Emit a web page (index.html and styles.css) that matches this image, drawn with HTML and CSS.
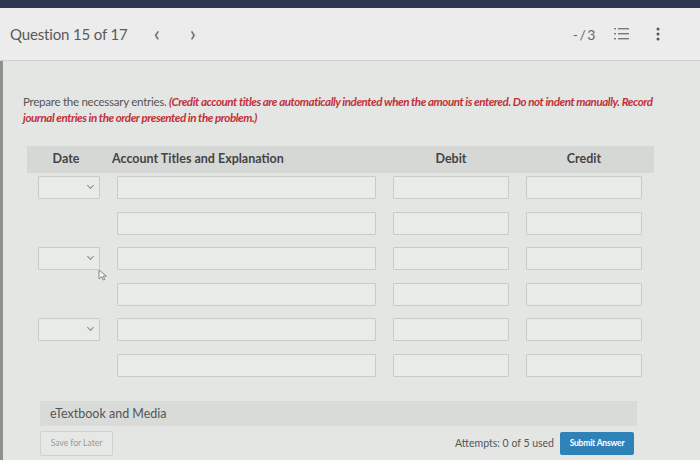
FILE: index.html
```html
<!DOCTYPE html>
<html>
<head>
<meta charset="utf-8">
<link rel="stylesheet" href="styles.css">
</head>
<body>
<div class="topstrip"></div>
<header class="qhead">
  <div class="qleft">
    <span class="qtitle">Question 15 of 17</span>
    <span class="nav">&lsaquo;</span>
    <span class="nav nav2">&rsaquo;</span>
  </div>
  <div class="qright">
    <span class="score">-/3</span>
    <svg class="listicon" width="16" height="14" viewBox="0 0 16 14">
      <g fill="#7a7a7a">
        <rect x="0" y="1" width="2" height="1.4"/>
        <rect x="0" y="6" width="2" height="1.4"/>
        <rect x="0" y="11" width="2" height="1.4"/>
        <rect x="4" y="1" width="11" height="1.4"/>
        <rect x="4" y="6" width="11" height="1.4"/>
        <rect x="4" y="11" width="11" height="1.4"/>
      </g>
    </svg>
    <svg class="kebab" width="4" height="14" viewBox="0 0 4 14">
      <g fill="#555">
        <circle cx="2" cy="2" r="1.5"/>
        <circle cx="2" cy="7" r="1.5"/>
        <circle cx="2" cy="12" r="1.5"/>
      </g>
    </svg>
  </div>
</header>
<main class="main">
  <p class="instr">Prepare the necessary entries. <em class="red">(Credit account titles are automatically indented when the amount is entered. Do not indent manually. Record</em><br><em class="red">journal entries in the order presented in the problem.)</em></p>

  <div class="table">
    <div class="thead">
      <span class="th th-date">Date</span>
      <span class="th th-acct">Account Titles and Explanation</span>
      <span class="th th-num">Debit</span>
      <span class="th th-num">Credit</span>
    </div>
    <div class="rows">
      <div class="row">
        <div class="sel"><span class="chev"></span></div>
        <div class="inp"></div><div class="inp"></div><div class="inp"></div>
      </div>
      <div class="row">
        <div class="nosel"></div>
        <div class="inp"></div><div class="inp"></div><div class="inp"></div>
      </div>
      <div class="row">
        <div class="sel"><span class="chev"></span></div>
        <div class="inp"></div><div class="inp"></div><div class="inp"></div>
      </div>
      <div class="row">
        <div class="nosel"></div>
        <div class="inp"></div><div class="inp"></div><div class="inp"></div>
      </div>
      <div class="row">
        <div class="sel"><span class="chev"></span></div>
        <div class="inp"></div><div class="inp"></div><div class="inp"></div>
      </div>
      <div class="row">
        <div class="nosel"></div>
        <div class="inp"></div><div class="inp"></div><div class="inp"></div>
      </div>
    </div>
    <svg class="cursor" width="10" height="12" viewBox="0 0 10 12">
      <path d="M1 1 L1 10 L3.5 7.8 L5.3 11 L6.8 10.3 L5 7.2 L8.5 7.2 Z" fill="#f4f4f4" stroke="#777" stroke-width="0.9"/>
    </svg>
  </div>

  <div class="etext">eTextbook and Media</div>

  <div class="footer">
    <button class="save">Save for Later</button>
    <div class="fright">
      <span class="attempts">Attempts: 0 of 5 used</span>
      <button class="submit">Submit Answer</button>
    </div>
  </div>
</main>
</body>
</html>
```

FILE: styles.css
```css
* { box-sizing: border-box; }
html, body { margin: 0; padding: 0; }
body {
  width: 700px;
  height: 460px;
  overflow: hidden;
  background: #e4e6e4;
  font-family: Lato, "Open Sans", sans-serif;
  color: #444;
}
.topstrip {
  height: 8px;
  background: #2d3752;
}
.qhead {
  height: 53px;
  background: #ececec;
  border-bottom: 1px solid #cfcfcf;
  display: flex;
  align-items: center;
  justify-content: space-between;
  padding: 0 40px 0 10px;
}
.qleft { display: flex; align-items: center; }
.qtitle {
  font-size: 15px;
  color: #5a5a5a;
  letter-spacing: -0.15px;
}
.nav {
  font-size: 22px;
  color: #666;
  margin-left: 26px;
  line-height: 1;
  position: relative;
  top: -1px;
}
.nav2 { margin-left: 30px; }
.qright { display: flex; align-items: center; }
.score {
  font-size: 14px;
  color: #666;
  letter-spacing: 1.5px;
  margin-right: 17px;
}
.listicon { margin-right: 26px; }
.main {
  height: 399px;
  border-left: 3px solid #8e908e;
  padding: 0 0 0 20px;
}
.instr {
  margin: 0;
  padding-top: 33px;
  width: 660px;
  font-size: 11.6px;
  line-height: 16px;
  color: #555;
  letter-spacing: -0.3px;
  white-space: nowrap;
}
.red {
  color: #c2303a;
  font-weight: bold;
  font-style: italic;
  letter-spacing: -0.45px;
}
.table {
  margin-top: 20px;
  margin-left: 4px;
  width: 627px;
  position: relative;
}
.thead {
  height: 27px;
  background: #d6d8d6;
  display: grid;
  grid-template-columns: 62px 259px 116px 116px;
  column-gap: 17px;
  padding-left: 11px;
  padding-bottom: 3px;
  align-items: center;
  font-size: 12.5px;
  font-weight: bold;
  color: #444;
}
.th-date { text-align: center; padding-right: 6px; }
.th-acct { margin-left: -5px; }
.th-num { text-align: center; }
.rows {
  padding-top: 3px;
  display: flex;
  flex-direction: column;
  gap: 12.5px;
}
.row {
  display: grid;
  grid-template-columns: 62px 259px 116px 116px;
  column-gap: 17px;
  padding-left: 11px;
  height: 23px;
}
.inp, .sel {
  border: 1px solid #c9cbc9;
  background: #e9ebe9;
  border-radius: 1px;
}
.sel { position: relative; }
.chev {
  position: absolute;
  right: 6px;
  top: 6px;
  width: 5px;
  height: 5px;
  border-right: 1.3px solid #888;
  border-bottom: 1.3px solid #888;
  transform: rotate(45deg);
}
.cursor {
  position: absolute;
  left: 71px;
  top: 123px;
}
.etext {
  margin: 24px 0 0 17px;
  width: 597px;
  height: 25px;
  background: #d9dbd9;
  font-size: 12.5px;
  color: #555;
  padding: 5px 0 0 10px;
}
.footer {
  margin: 5px 0 0 17px;
  width: 594px;
  display: flex;
  justify-content: space-between;
  align-items: center;
}
.save {
  height: 25px;
  width: 73px;
  border: 1px solid #cfd1cf;
  background: #e6e8e6;
  font-family: Lato, sans-serif;
  font-size: 8.5px;
  color: #9a9a9a;
  padding: 0;
  border-radius: 2px;
}
.fright { display: flex; align-items: center; }
.attempts {
  font-size: 10.5px;
  color: #555;
  margin-right: 6px;
}
.submit {
  height: 23px;
  width: 74px;
  border: none;
  background: #2f82b8;
  color: #fff;
  font-family: Lato, sans-serif;
  font-size: 8.5px;
  font-weight: bold;
  border-radius: 2px;
  padding: 0;
  letter-spacing: -0.2px;
}
```
